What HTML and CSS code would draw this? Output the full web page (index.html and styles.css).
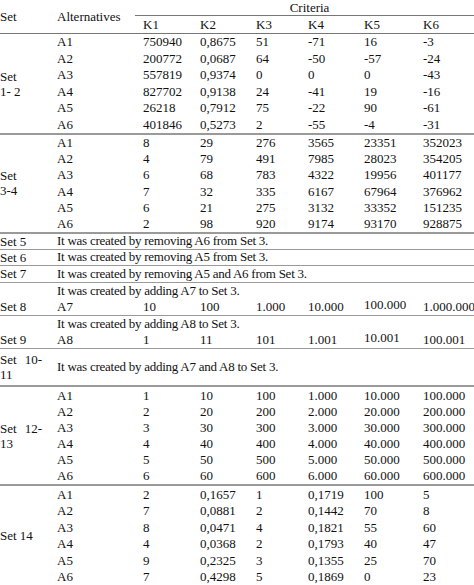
FILE: index.html
```html
<!DOCTYPE html>
<html>
<head>
<meta charset="utf-8">
<link rel="stylesheet" href="styles.css">
</head>
<body>
<table class="tbl">
  <colgroup>
    <col class="c-set"><col class="c-alt"><col class="c-k1"><col class="c-k2"><col class="c-k3"><col class="c-k4"><col class="c-k5"><col class="c-k6">
  </colgroup>
  <thead>
    <tr class="h1">
      <th rowspan="2" class="hs">Set</th>
      <th rowspan="2" class="ha">Alternatives</th>
      <th colspan="6" class="hc">Criteria</th>
    </tr>
    <tr class="h2">
      <th class="k">K1</th><th class="k">K2</th><th class="k">K3</th><th class="k">K4</th><th class="k">K5</th><th class="k">K6</th>
    </tr>
  </thead>
  <tbody class="grp g12">
    <tr><td rowspan="6" class="set">Set<br>1- 2</td><td>A1</td><td class="v">750940</td><td class="v">0,8675</td><td class="v">51</td><td class="v">-71</td><td class="v">16</td><td class="v">-3</td></tr>
    <tr><td>A2</td><td class="v">200772</td><td class="v">0,0687</td><td class="v">64</td><td class="v">-50</td><td class="v">-57</td><td class="v">-24</td></tr>
    <tr><td>A3</td><td class="v">557819</td><td class="v">0,9374</td><td class="v">0</td><td class="v">0</td><td class="v">0</td><td class="v">-43</td></tr>
    <tr><td>A4</td><td class="v">827702</td><td class="v">0,9138</td><td class="v">24</td><td class="v">-41</td><td class="v">19</td><td class="v">-16</td></tr>
    <tr><td>A5</td><td class="v">26218</td><td class="v">0,7912</td><td class="v">75</td><td class="v">-22</td><td class="v">90</td><td class="v">-61</td></tr>
    <tr><td>A6</td><td class="v">401846</td><td class="v">0,5273</td><td class="v">2</td><td class="v">-55</td><td class="v">-4</td><td class="v">-31</td></tr>
  </tbody>
  <tbody class="grp thick g34">
    <tr><td rowspan="6" class="set">Set<br>3-4</td><td>A1</td><td class="v">8</td><td class="v">29</td><td class="v">276</td><td class="v">3565</td><td class="v">23351</td><td class="v">352023</td></tr>
    <tr><td>A2</td><td class="v">4</td><td class="v">79</td><td class="v">491</td><td class="v">7985</td><td class="v">28023</td><td class="v">354205</td></tr>
    <tr><td>A3</td><td class="v">6</td><td class="v">68</td><td class="v">783</td><td class="v">4322</td><td class="v">19956</td><td class="v">401177</td></tr>
    <tr><td>A4</td><td class="v">7</td><td class="v">32</td><td class="v">335</td><td class="v">6167</td><td class="v">67964</td><td class="v">376962</td></tr>
    <tr><td>A5</td><td class="v">6</td><td class="v">21</td><td class="v">275</td><td class="v">3132</td><td class="v">33352</td><td class="v">151235</td></tr>
    <tr><td>A6</td><td class="v">2</td><td class="v">98</td><td class="v">920</td><td class="v">9174</td><td class="v">93170</td><td class="v">928875</td></tr>
  </tbody>
  <tbody class="grp thick g5">
    <tr><td class="set">Set 5</td><td colspan="7" class="txt">It was created by removing A6 from Set 3.</td></tr>
  </tbody>
  <tbody class="grp thin g6">
    <tr><td class="set">Set 6</td><td colspan="7" class="txt">It was created by removing A5 from Set 3.</td></tr>
  </tbody>
  <tbody class="grp thin g7">
    <tr><td class="set">Set 7</td><td colspan="7" class="txt">It was created by removing A5 and A6 from Set 3.</td></tr>
  </tbody>
  <tbody class="grp thin g8">
    <tr><td class="set"></td><td colspan="7" class="txt">It was created by adding A7 to Set 3.</td></tr>
    <tr><td class="set">Set 8</td><td>A7</td><td class="v">10</td><td class="v">100</td><td class="v">1.000</td><td class="v">10.000</td><td class="v up">100.000</td><td class="v">1.000.000</td></tr>
  </tbody>
  <tbody class="grp thin g9">
    <tr><td class="set"></td><td colspan="7" class="txt">It was created by adding A8 to Set 3.</td></tr>
    <tr><td class="set">Set 9</td><td>A8</td><td class="v">1</td><td class="v">11</td><td class="v">101</td><td class="v">1.001</td><td class="v up">10.001</td><td class="v">100.001</td></tr>
  </tbody>
  <tbody class="grp thin g10">
    <tr><td class="set"><span class="jl"><span>Set</span><span>10-</span></span>11</td><td colspan="7" class="txt">It was created by adding A7 and A8 to Set 3.</td></tr>
  </tbody>
  <tbody class="grp thick g12b">
    <tr><td rowspan="6" class="set"><span class="jl"><span>Set</span><span>12-</span></span>13</td><td>A1</td><td class="v">1</td><td class="v">10</td><td class="v">100</td><td class="v">1.000</td><td class="v">10.000</td><td class="v">100.000</td></tr>
    <tr><td>A2</td><td class="v">2</td><td class="v">20</td><td class="v">200</td><td class="v">2.000</td><td class="v">20.000</td><td class="v">200.000</td></tr>
    <tr><td>A3</td><td class="v">3</td><td class="v">30</td><td class="v">300</td><td class="v">3.000</td><td class="v">30.000</td><td class="v">300.000</td></tr>
    <tr><td>A4</td><td class="v">4</td><td class="v">40</td><td class="v">400</td><td class="v">4.000</td><td class="v">40.000</td><td class="v">400.000</td></tr>
    <tr><td>A5</td><td class="v">5</td><td class="v">50</td><td class="v">500</td><td class="v">5.000</td><td class="v">50.000</td><td class="v">500.000</td></tr>
    <tr><td>A6</td><td class="v">6</td><td class="v">60</td><td class="v">600</td><td class="v">6.000</td><td class="v">60.000</td><td class="v">600.000</td></tr>
  </tbody>
  <tbody class="grp thick g14">
    <tr><td rowspan="6" class="set">Set 14</td><td>A1</td><td class="v">2</td><td class="v">0,1657</td><td class="v">1</td><td class="v">0,1719</td><td class="v">100</td><td class="v">5</td></tr>
    <tr><td>A2</td><td class="v">7</td><td class="v">0,0881</td><td class="v">2</td><td class="v">0,1442</td><td class="v">70</td><td class="v">8</td></tr>
    <tr><td>A3</td><td class="v">8</td><td class="v">0,0471</td><td class="v">4</td><td class="v">0,1821</td><td class="v">55</td><td class="v">60</td></tr>
    <tr><td>A4</td><td class="v">4</td><td class="v">0,0368</td><td class="v">2</td><td class="v">0,1793</td><td class="v">40</td><td class="v">47</td></tr>
    <tr><td>A5</td><td class="v">9</td><td class="v">0,2325</td><td class="v">3</td><td class="v">0,1355</td><td class="v">25</td><td class="v">70</td></tr>
    <tr><td>A6</td><td class="v">7</td><td class="v">0,4298</td><td class="v">5</td><td class="v">0,1869</td><td class="v">0</td><td class="v">23</td></tr>
  </tbody>
</table>
</body>
</html>
```

FILE: styles.css
```css
html { overflow: hidden; background: #fff; }
body {
  margin: 0;
  font-family: "Liberation Serif", "Times New Roman", serif;
  font-size: 13px;
  color: #111;
}
.tbl {
  border-collapse: collapse;
  table-layout: fixed;
  width: 484px;
}
.c-set { width: 57px; }
.c-alt { width: 78px; }
.c-k1 { width: 57px; }
.c-k2 { width: 56px; }
.c-k3 { width: 52px; }
.c-k4 { width: 56px; }
.c-k5 { width: 59px; }
.c-k6 { width: 69px; }
th, td {
  padding: 0;
  text-align: left;
  font-weight: normal;
  vertical-align: middle;
  line-height: 14px;
  white-space: nowrap;
}
.h1 th { height: 15px; }
.h2 th { height: 17px; }
.hc { text-align: center; border-bottom: 1px solid #777; }
.k { padding-left: 8px; }
thead { border-bottom: 1px solid #777; }
td { height: 16.5px; }
td.v { padding-left: 8px; }
.txt { letter-spacing: -0.25px; }
.set { white-space: normal; line-height: 15px; }
.g34 td { height: 16.17px; }
.g5 td { height: 14.5px; }
.g6 td { height: 15px; }
.g7 td { height: 16px; }
.g8 td { height: 16px; }
.g9 td { height: 16px; }
.g10 td { height: 36.5px; }
.g12b td { height: 16.17px; }
.jl { display: flex; justify-content: space-between; width: 42px; }
.grp.thick { border-top: 2px solid #9a9a9a; }
.grp.thin { border-top: 1px solid #9a9a9a; }
.up { position: relative; top: -2px; }
```
